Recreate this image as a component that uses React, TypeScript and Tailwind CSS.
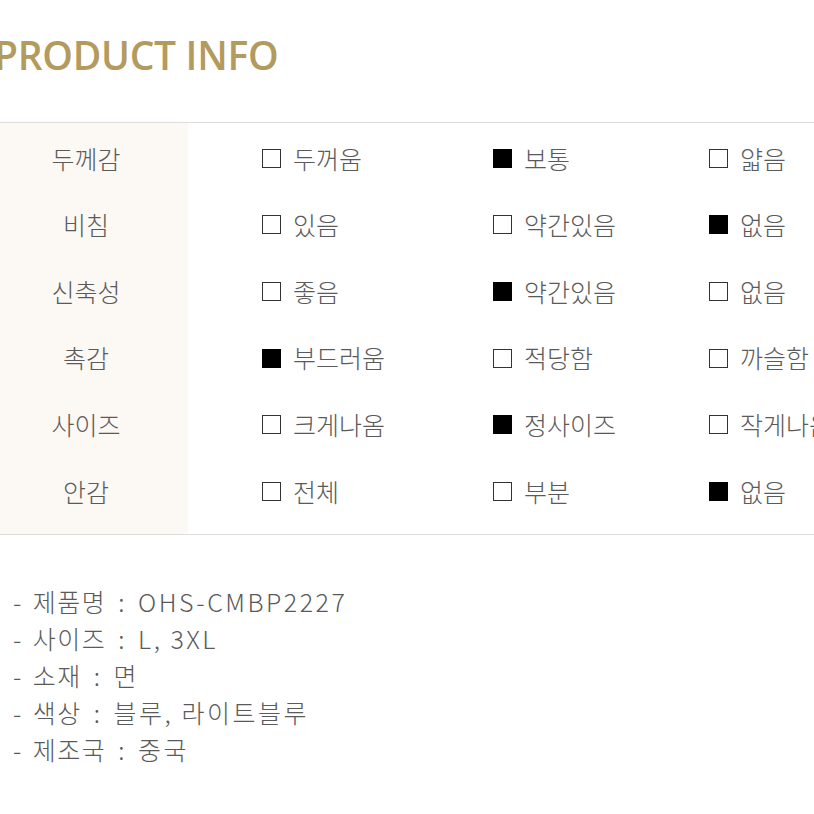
const rows: { label: string; options: [string, boolean][] }[] = [
  { label: "두께감", options: [["두꺼움", false], ["보통", true], ["얇음", false]] },
  { label: "비침", options: [["있음", false], ["약간있음", false], ["없음", true]] },
  { label: "신축성", options: [["좋음", false], ["약간있음", true], ["없음", false]] },
  { label: "촉감", options: [["부드러움", true], ["적당함", false], ["까슬함", false]] },
  { label: "사이즈", options: [["크게나옴", false], ["정사이즈", true], ["작게나옴", false]] },
  { label: "안감", options: [["전체", false], ["부분", false], ["없음", true]] },
];

const details = [
  ["제품명", "OHS-CMBP2227"],
  ["사이즈", "L, 3XL"],
  ["소재", "면"],
  ["색상", "블루, 라이트블루"],
  ["제조국", "중국"],
];

function Box({ checked }: { checked: boolean }) {
  return checked ? (
    <span className="w-[19px] h-[19px] bg-black shrink-0" />
  ) : (
    <span className="w-[19px] h-[19px] border-[1.5px] border-[#333] bg-white shrink-0" />
  );
}

export default function App() {
  return (
    <div
      className="w-[814px] h-[814px] overflow-hidden bg-white text-[#5a5a5a]"
      style={{ fontFamily: '"Noto Sans CJK KR", "Noto Sans", sans-serif' }}
    >
      <div className="h-[122px] pt-[35px]">
        <h1
          className="ml-[-6px] text-[39px] leading-none font-semibold tracking-[-0.3px] text-[#b39a5e] whitespace-nowrap"
          style={{ fontFamily: '"Open Sans", sans-serif' }}
        >
          PRODUCT INFO
        </h1>
      </div>

      <div className="flex border-y border-[#dcdcdc]">
        <div className="w-[188px] shrink-0 bg-[#fcf8f4] pt-[2px] pb-[9px] pr-[16px]">
          {rows.map((r) => (
            <div key={r.label} className="h-[66.6px] flex items-center justify-center text-[25px] font-light">
              {r.label}
            </div>
          ))}
        </div>
        <div className="flex-1 pt-[2px] pb-[9px]">
          {rows.map((r) => (
            <div key={r.label} className="h-[66.6px] grid grid-cols-[231px_216px_216px] items-center">
              {r.options.map(([text, checked]) => (
                <div key={text} className="pl-[74px] flex items-center gap-[12px] text-[25px] font-light whitespace-nowrap">
                  <Box checked={checked} />
                  <span>{text}</span>
                </div>
              ))}
            </div>
          ))}
        </div>
      </div>

      <ul className="mt-[48px] pl-[13px] text-[25px] font-light leading-[37px] tracking-[1.5px]">
        {details.map(([k, v]) => (
          <li key={k} className="whitespace-nowrap flex">
            <span className="mr-[10px]">-</span>
            <span>{k}</span>
            <span className="mx-[12px]">:</span>
            <span className="tracking-[2.5px]">{v}</span>
          </li>
        ))}
      </ul>
    </div>
  );
}
